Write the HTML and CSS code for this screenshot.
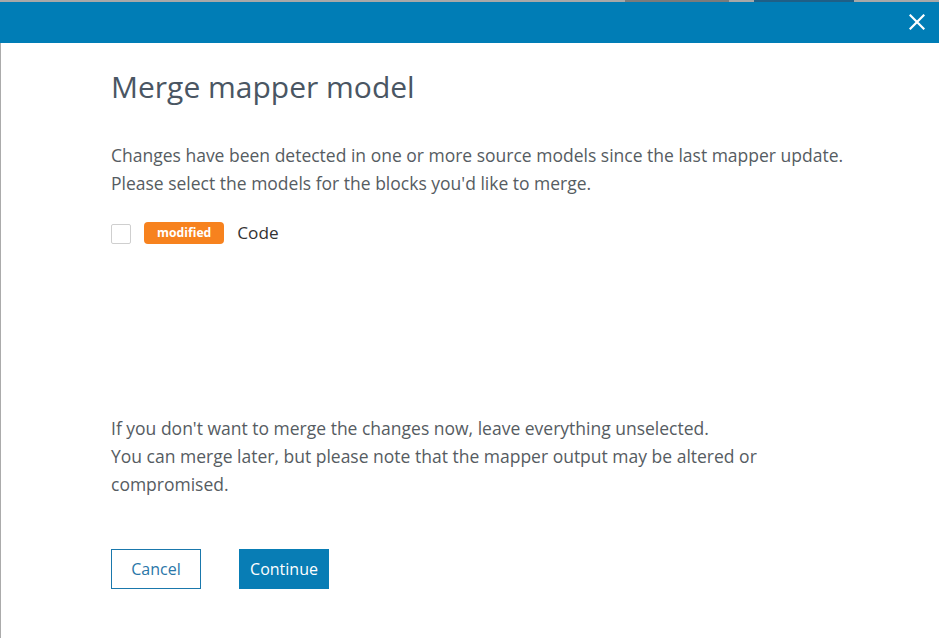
FILE: index.html
```html
<!DOCTYPE html>
<html lang="en">
<head>
<meta charset="utf-8">
<title>Merge mapper model</title>
<link rel="stylesheet" href="styles.css">
</head>
<body>
<div class="strip">
  <span class="tab tab-grey"></span>
  <span class="tab tab-blue"></span>
</div>
<header class="bar">
  <button class="close" aria-label="Close">
    <svg width="16" height="16" viewBox="0 0 16 16"><path d="M1.5 1.5 L14.5 14.5 M14.5 1.5 L1.5 14.5" stroke="#fff" stroke-width="2.2" stroke-linecap="square" fill="none"/></svg>
  </button>
</header>
<main class="content">
  <h1 class="title">Merge mapper model</h1>
  <p class="text intro">Changes have been detected in one or more source models since the last mapper update.<br>Please select the models for the blocks you'd like to merge.</p>
  <div class="row">
    <span class="check"></span>
    <span class="badge">modified</span>
    <span class="name">Code</span>
  </div>
  <p class="text note">If you don't want to merge the changes now, leave everything unselected.<br>You can merge later, but please note that the mapper output may be altered or compromised.</p>
  <div class="actions">
    <button class="btn btn-outline">Cancel</button>
    <button class="btn btn-primary">Continue</button>
  </div>
</main>
</body>
</html>
```
FILE: styles.css
```css
html, body {
  margin: 0;
  padding: 0;
  background: #fff;
  height: 100%;
}
body {
  font-family: "Open Sans", "Liberation Sans", sans-serif;
  display: flex;
  flex-direction: column;
}
.strip {
  height: 2px;
  background: #a8a8a8;
  display: flex;
}
.tab {
  height: 2px;
  display: block;
}
.tab-grey {
  margin-left: 625px;
  width: 104px;
  background: #7b7b7b;
}
.tab-blue {
  margin-left: 25px;
  width: 100px;
  background: #1f5f86;
}
.bar {
  height: 41px;
  background: #007db6;
  display: flex;
  justify-content: flex-end;
  align-items: center;
}
.close {
  background: none;
  border: 0;
  padding: 0;
  margin-right: 14px;
  margin-top: -2px;
  width: 16px;
  height: 16px;
  display: flex;
}
.content {
  flex: 1;
  border-left: 1px solid #ababab;
  padding: 27px 0 0 110px;
  width: 745px;
}
.title {
  margin: 0;
  font-size: 30px;
  line-height: 34px;
  font-weight: 400;
  color: #4a5663;
}
.text {
  margin: 0;
  font-size: 17.5px;
  line-height: 28px;
  color: #565c62;
}
.intro {
  margin-top: 37px;
}
.row {
  margin-top: 25px;
  display: flex;
  align-items: center;
  height: 22px;
}
.check {
  width: 18px;
  height: 18px;
  border: 1px solid #cfcfcf;
  border-radius: 2px;
  background: #fff;
  margin-top: 1px;
}
.badge {
  margin-left: 13px;
  height: 22px;
  line-height: 21px;
  padding: 0 13px;
  background: #f7821e;
  color: #fff;
  border-radius: 4px;
  font-size: 12.2px;
  font-weight: 700;
}
.name {
  margin-left: 13px;
  font-size: 17.2px;
  color: #333;
  line-height: 22px;
}
.note {
  margin-top: 170px;
}
.actions {
  margin-top: 51px;
  display: flex;
  gap: 38px;
}
.btn {
  width: 90px;
  height: 40px;
  font-family: inherit;
  font-size: 16px;
  padding: 0;
  border-radius: 0;
  cursor: pointer;
}
.btn-outline {
  background: #fff;
  border: 1px solid #1a78ac;
  color: #2a76a8;
}
.btn-primary {
  background: #087db5;
  border: 1px solid #087db5;
  color: #fff;
}
```
